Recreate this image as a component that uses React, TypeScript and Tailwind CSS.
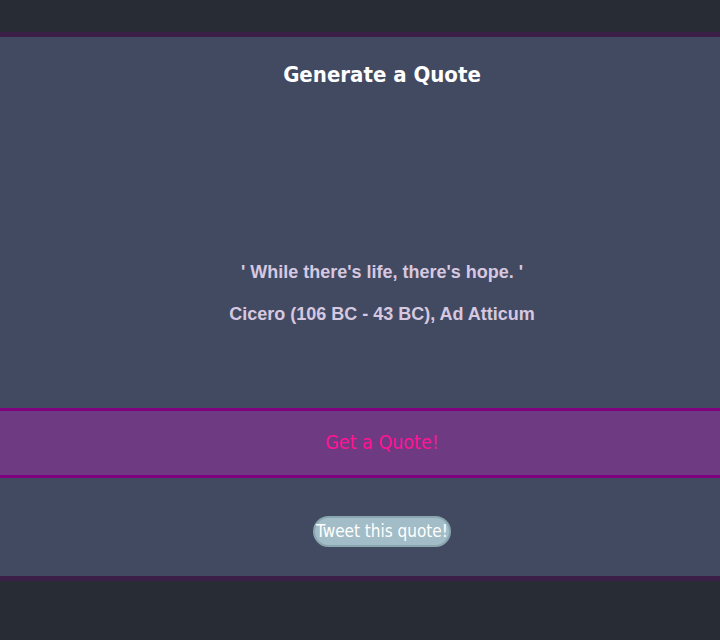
export default function App() {
  return (
    <div className="min-h-[640px] bg-[#282c34] pt-8">
      <div className="border-y-[5px] border-[#3b1f47] bg-[#424a62]">
        <h1 className="pl-[44px] pt-6 text-center text-[22px] font-bold leading-7 text-white [font-family:'DejaVu_Sans_Condensed','DejaVu_Sans',sans-serif]">
          Generate a Quote
        </h1>
        <div className="flex h-[319px] flex-col items-center justify-end pb-[82px] pl-[44px] text-[18px] font-bold text-[#d6c8e0] [font-family:'Liberation_Sans',Arial,sans-serif]">
          <p className="leading-6">' While there's life, there's hope. '</p>
          <p className="mt-[18px] leading-6">Cicero (106 BC - 43 BC), Ad Atticum</p>
        </div>
        <button className="flex h-[70px] w-full items-center justify-center border-y-[3px] border-[#800080] bg-[#6e3a82] pl-[44px] text-[19.5px] text-[#ff1493] [font-family:'DejaVu_Sans_Condensed','DejaVu_Sans',sans-serif]">
          Get a Quote!
        </button>
        <div className="flex h-[98px] items-start justify-center pl-[44px] pt-[38px]">
          <button className="h-[31px] rounded-full border-2 border-[#8aa6ae] bg-[#a2bdc7] px-[1px] text-[17px] leading-none text-white [font-family:'DejaVu_Sans_Condensed','DejaVu_Sans',sans-serif]">
            Tweet this quote!
          </button>
        </div>
      </div>
    </div>
  );
}
